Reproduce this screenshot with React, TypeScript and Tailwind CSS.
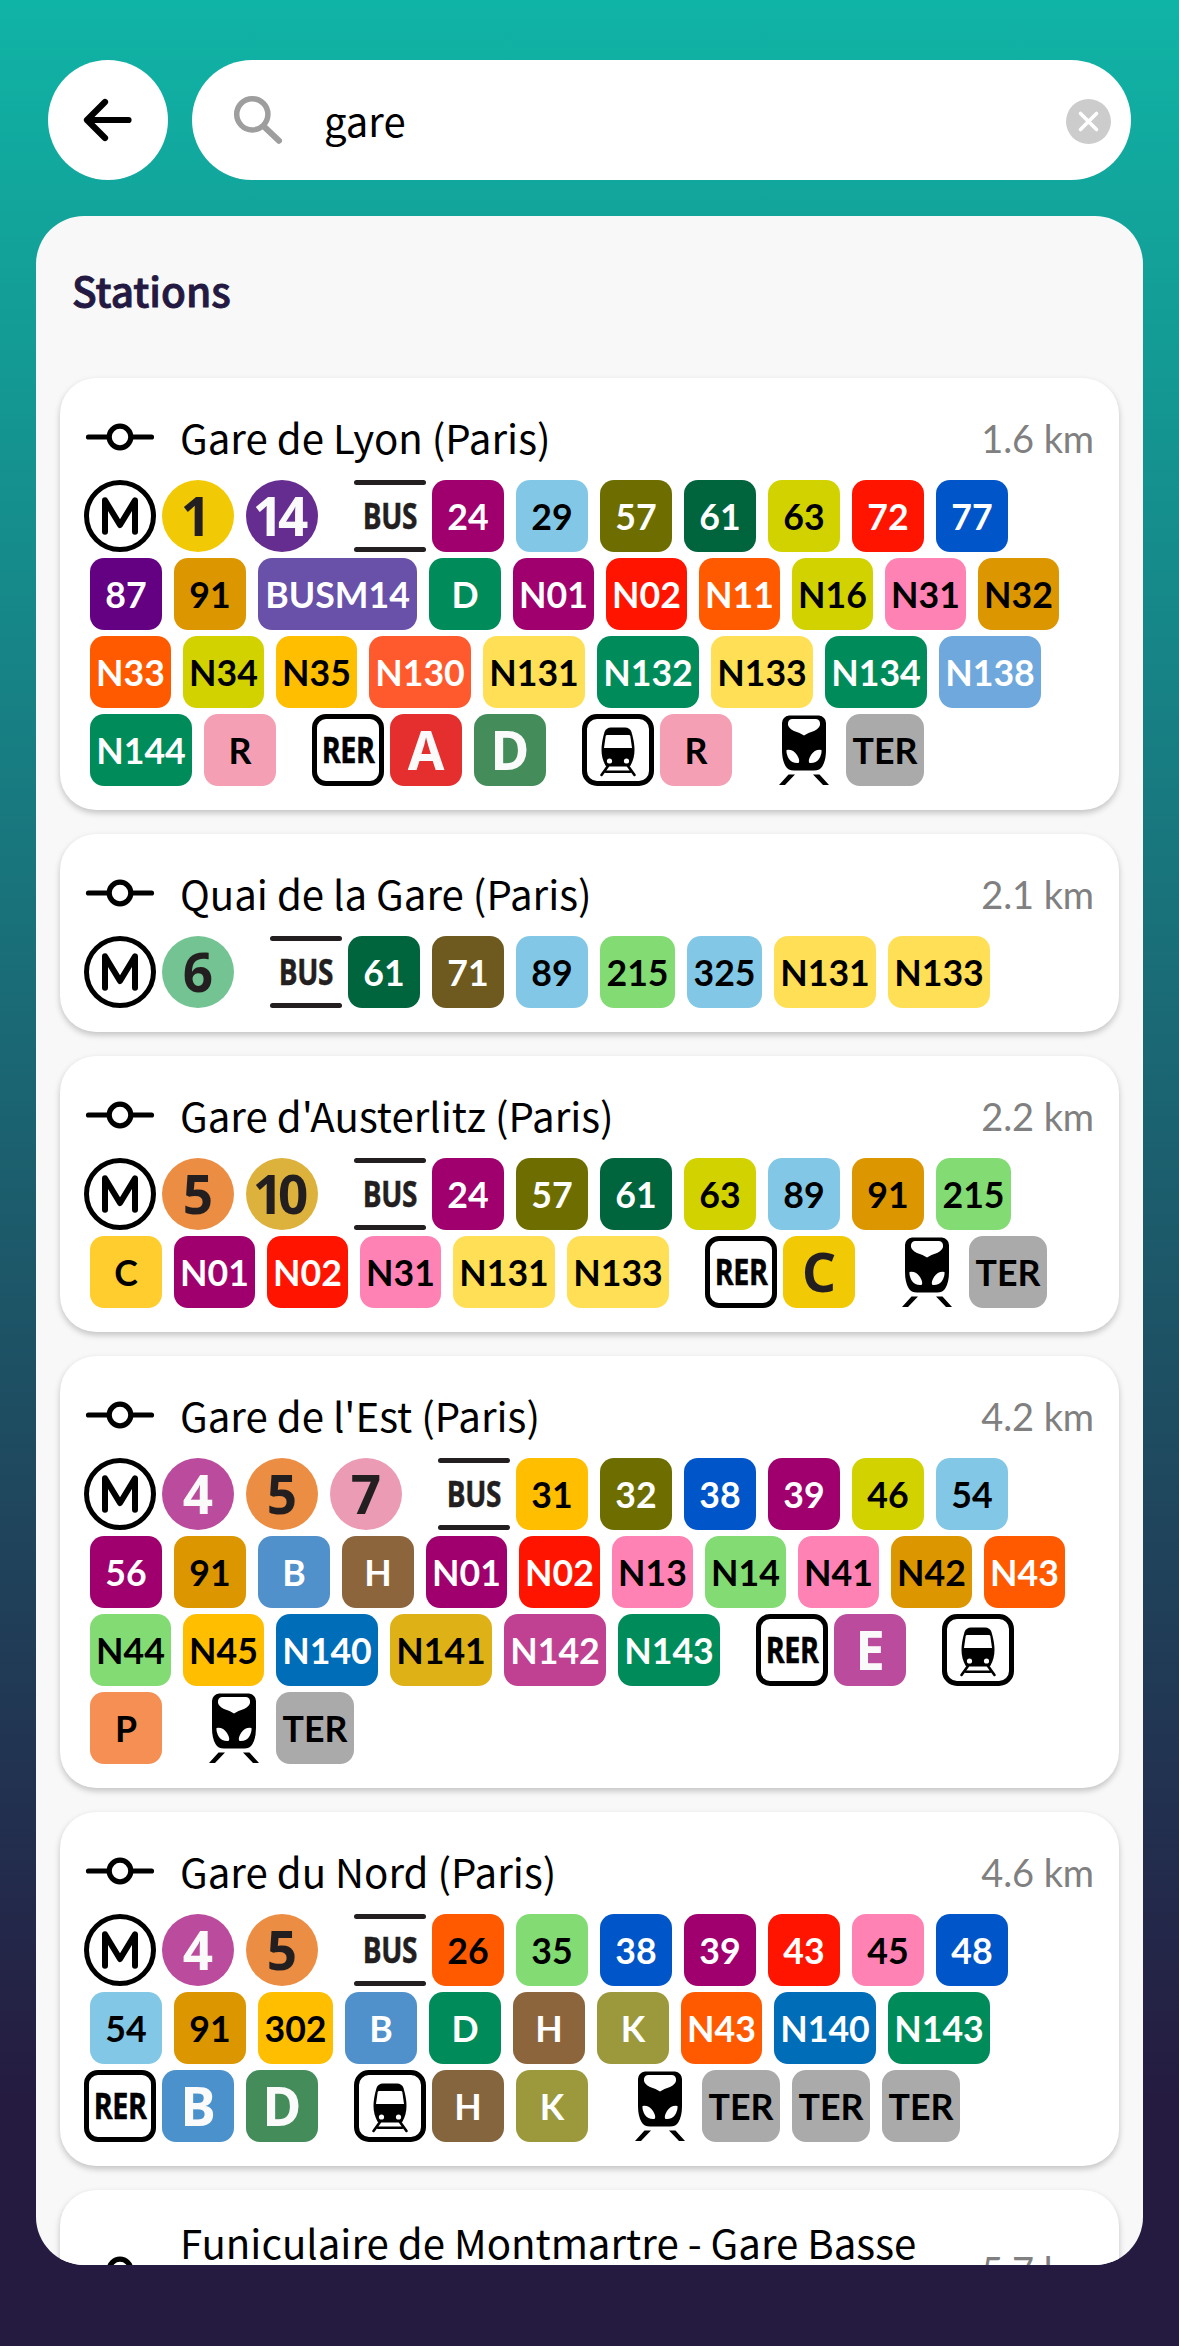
import React from "react";

type Tone = "w" | "k";
type Mode = "metro" | "bus" | "rer" | "train" | "ter";
type Item =
  | { k: "mode"; name: Mode }
  | { k: "gap" }
  | { k: "line"; t: string; bg: string; tone: Tone }
  | { k: "disc"; t: string; bg: string; tone: Tone }
  | { k: "rerLine"; t: string; bg: string; tone: Tone };

const W: Tone = "w";
const K: Tone = "k";

/* Colour and text tone of every bus / rail line badge */
const LINES: Record<string, [string, Tone]> = {
  "24": ["#a0006e", W], "29": ["#82c8e6", K], "57": ["#6e6e00", W], "61": ["#00643c", W],
  "63": ["#d2d200", K], "72": ["#ff1400", W], "77": ["#0055c8", W], "87": ["#640082", W],
  "91": ["#dc9600", K], BUSM14: ["#6950a8", W], D: ["#008c5a", W], N01: ["#a0006e", W],
  N02: ["#ff1400", W], N11: ["#ff5a00", W], N16: ["#d2d200", K], N31: ["#ff82b4", K],
  N32: ["#dc9600", K], N33: ["#ff5a00", W], N34: ["#d2d200", K], N35: ["#ffbe00", K],
  N130: ["#ff5a2d", W], N131: ["#ffdf55", K], N132: ["#008c5a", W], N133: ["#ffdf55", K],
  N134: ["#008c5a", W], N138: ["#6ea8dc", W], N144: ["#008c5a", W], R: ["#f49fb3", K],
  TER: ["#aaaaaa", K], "71": ["#6e5a1e", W], "89": ["#82c8e6", K], "215": ["#82dc73", K],
  "325": ["#82c8e6", K], C: ["#ffcd2d", K], "31": ["#ffbe00", K], "32": ["#6e6e00", W],
  "38": ["#0055c8", W], "39": ["#a0006e", W], "46": ["#d2d200", K], "54": ["#82c8e6", K],
  "56": ["#a0006e", W], B: ["#5091cb", W], H: ["#8d653d", W], N13: ["#ff82b4", K],
  N14: ["#82dc73", K], N41: ["#ff82b4", K], N42: ["#dc9600", K], N43: ["#ff5a00", W],
  N44: ["#82dc73", K], N45: ["#ffbe00", K], N140: ["#006db8", W], N141: ["#deb217", K],
  N142: ["#c04191", W], N143: ["#008c5a", W], P: ["#f68f53", K], "26": ["#ff5a00", K],
  "35": ["#82dc73", K], "43": ["#ff1400", W], "45": ["#ff82b4", K], "48": ["#0055c8", W],
  "302": ["#ffbe00", K], K: ["#9b993b", W], Ht: ["#84653d", W],
};

const METRO: Record<string, [string, Tone]> = {
  "1": ["#f2c905", K], "14": ["#662d91", W], "6": ["#73c492", K], "5": ["#eb8d43", K],
  "10": ["#dcb13c", K], "4": ["#bb4b9c", W], "7": ["#eb9bb4", K],
};

const RER: Record<string, [string, Tone]> = {
  A: ["#e52e2e", W], D: ["#458c5b", W], C: ["#f2c905", K], E: ["#bb4b9c", W], B: ["#4b92cd", W],
};

const lines = (s: string): Item[] =>
  s.split(" ").map((t) => ({ k: "line", t: t === "Ht" ? "H" : t, bg: LINES[t][0], tone: LINES[t][1] }));
const metro = (s: string): Item[] => [
  { k: "mode", name: "metro" },
  ...s.split(" ").map((t): Item => ({ k: "disc", t, bg: METRO[t][0], tone: METRO[t][1] })),
];
const rer = (s: string): Item[] => [
  { k: "gap" },
  { k: "mode", name: "rer" },
  ...s.split(" ").map((t): Item => ({ k: "rerLine", t, bg: RER[t][0], tone: RER[t][1] })),
];
const bus = (s: string): Item[] => [{ k: "gap" }, { k: "mode", name: "bus" }, ...lines(s)];
const train = (s: string): Item[] => [{ k: "gap" }, { k: "mode", name: "train" }, ...lines(s)];
const ter = (s: string): Item[] => [{ k: "gap" }, { k: "mode", name: "ter" }, ...lines(s)];

const STATIONS: { name: string; km: string; items: Item[] }[] = [
  {
    name: "Gare de Lyon (Paris)",
    km: "1.6 km",
    items: [
      ...metro("1 14"),
      ...bus("24 29 57 61 63 72 77 87 91 BUSM14 D N01 N02 N11 N16 N31 N32 N33 N34 N35 N130 N131 N132 N133 N134 N138 N144 R"),
      ...rer("A D"),
      ...train("R"),
      ...ter("TER"),
    ],
  },
  {
    name: "Quai de la Gare (Paris)",
    km: "2.1 km",
    items: [...metro("6"), ...bus("61 71 89 215 325 N131 N133")],
  },
  {
    name: "Gare d'Austerlitz (Paris)",
    km: "2.2 km",
    items: [
      ...metro("5 10"),
      ...bus("24 57 61 63 89 91 215 C N01 N02 N31 N131 N133"),
      ...rer("C"),
      ...ter("TER"),
    ],
  },
  {
    name: "Gare de l'Est (Paris)",
    km: "4.2 km",
    items: [
      ...metro("4 5 7"),
      ...bus("31 32 38 39 46 54 56 91 B H N01 N02 N13 N14 N41 N42 N43 N44 N45 N140 N141 N142 N143"),
      ...rer("E"),
      ...train("P"),
      ...ter("TER"),
    ],
  },
  {
    name: "Gare du Nord (Paris)",
    km: "4.6 km",
    items: [
      ...metro("4 5"),
      ...bus("26 35 38 39 43 45 48 54 91 302 B D H K N43 N140 N143"),
      ...rer("B D"),
      ...train("Ht K"),
      ...ter("TER TER TER"),
    ],
  },
];

function ModeIcon({ name }: { name: Mode }) {
  if (name === "metro")
    return (
      <svg className="h-[72px] w-[72px] shrink-0" viewBox="0 0 72 72" fill="none" stroke="#000">
        <circle cx="36" cy="36" r="33.500" strokeWidth="5" />
        <path d="M21 51.800V20.300L36 45L51 20.300V51.800" strokeWidth="6" strokeLinecap="round" strokeLinejoin="round" />
      </svg>
    );
  if (name === "bus")
    return (
      <div className="flex h-[72px] w-[72px] shrink-0 flex-col items-center justify-between">
        <div className="h-[5px] w-full rounded-full bg-[#231f20]" />
        <span className="-ml-[1px] scale-x-[0.80] font-['Open_Sans','Noto_Sans',sans-serif] text-[35px] leading-[62px] font-bold tracking-[-0.5px] text-[#231f20] [-webkit-text-stroke:0.5px_#231f20]">BUS</span>
        <div className="h-[5px] w-full rounded-full bg-[#231f20]" />
      </div>
    );
  if (name === "rer")
    return (
      <div className="flex h-[72px] w-[72px] shrink-0 items-center justify-center rounded-[14px] border-[5px] border-black bg-white">
        <span className="scale-x-[0.82] font-['Open_Sans','Noto_Sans',sans-serif] text-[35px] leading-[62px] font-bold tracking-[-0.5px] text-black [-webkit-text-stroke:0.5px_#000]">RER</span>
      </div>
    );
  if (name === "train")
    return (
      <svg className="h-[72px] w-[72px] shrink-0" viewBox="0 0 72 72">
        <rect x="2.500" y="2.500" width="67" height="67" rx="12.500" fill="#fff" stroke="#000" strokeWidth="5" />
        <path d="M29 13.500H43C46 13.500 48.500 15 49.500 18C51.500 25 52.500 30 52.500 36C52.500 42 51 47 48.500 51.500C48 52.200 47.500 52.500 46.500 52.500H25.500C24.500 52.500 24 52.200 23.500 51.500C21 47 19.500 42 19.500 36C19.500 30 20.500 25 22.500 18C23.500 15 26 13.500 29 13.500Z" fill="#000" />
        <path d="M25 21H47Q48 21 48.300 22L50 34H22L23.700 22Q24 21 25 21Z" fill="#fff" />
        <circle cx="27.500" cy="47" r="2.600" fill="#fff" />
        <circle cx="44.500" cy="47" r="2.600" fill="#fff" />
        <path d="M26 52L19.500 61M46 52L52.500 61M24 57.800H48" stroke="#000" strokeWidth="2.600" strokeLinecap="round" />
      </svg>
    );
  return (
    <svg className="h-[72px] w-[72px] shrink-0" viewBox="0 0 72 72">
      <path d="M21 1.500H51Q54 1.500 56 4Q58 6 58 9V36Q58 46 54.500 52Q52 56.500 46 56.500H26Q20 56.500 17.500 52Q14 46 14 36V9Q14 6 16 4Q18 1.500 21 1.500Z" fill="#000" />
      <path d="M24 5H48Q52.500 5.500 52 11Q51 14.500 46 17Q40 18.500 36 21.500Q32 18.500 26 17Q21 14.500 20 11Q19.500 5.500 24 5Z" fill="#fff" />
      <path d="M18.500 36Q25 35 29 41Q32.500 47 30.500 49Q24 49.500 21 45Q18 40 18.500 36ZM53.500 36Q47 35 43 41Q39.500 47 41.500 49Q48 49.500 51 45Q54 40 53.500 36Z" fill="#fff" />
      <path d="M20.500 60.500H27L17 71H11ZM51.500 60.500H45L55 71H61Z" fill="#000" />
    </svg>
  );
}

/* Badge widths follow the length of the line's name */
const lineWidth = (t: string) => {
  if (t === "TER") return "w-[78px]";
  if (t.length === 6) return "w-[159px]";
  if (t.length === 4) return "w-[102px]";
  if (t.length === 3) return t[0] === "N" ? "w-[81px]" : "w-[75px]";
  return "w-[72px]";
};

function Badge({ item }: { item: Item }) {
  if (item.k === "gap") return <span className="h-[72px] w-[30px] shrink-0" />;
  if (item.k === "mode") return <ModeIcon name={item.name} />;
  if (item.k === "line")
    return (
      <span
        className={`mx-[6px] flex h-[72px] shrink-0 items-center justify-center rounded-[14px] pt-[1px] font-[Lato,sans-serif] text-[35.7px] font-bold ${lineWidth(item.t)} ${item.tone === "w" ? "text-white" : "text-black"}`}
        style={{ backgroundColor: item.bg }}
      >
        {item.t}
      </span>
    );
  const spacing = item.t.length > 1 ? "-ml-[8px] tracking-[-5px]" : item.t === "1" ? "-ml-[4px]" : "";
  return (
    <span
      className={`mx-[6px] flex h-[72px] w-[72px] shrink-0 items-center justify-center font-['Noto_Sans','Open_Sans',sans-serif] text-[53px] font-bold ${item.k === "disc" ? "rounded-full" : "rounded-[14px]"} ${item.tone === "w" ? "text-[#fafafa]" : "text-[#231f20]"}`}
      style={{ backgroundColor: item.bg }}
    >
      <span className={`leading-[72px] ${spacing}`}>{item.t}</span>
    </span>
  );
}

function StopIcon() {
  return (
    <svg className="h-[30px] w-[72px] shrink-0" viewBox="0 0 72 30" fill="none" stroke="#000" strokeWidth="5.200">
      <path d="M4.500 15H25M47 15H67.500" strokeLinecap="round" />
      <circle cx="36" cy="15" r="10.800" fill="#fff" />
    </svg>
  );
}

const CARD = "rounded-[36px] bg-white px-6 shadow-[0_3px_6px_rgba(0,0,0,0.22)]";
const TITLE = "font-['Noto_Sans_CJK_JP',sans-serif] text-[40.2px] leading-[60px] text-black whitespace-nowrap";
const DISTANCE = "font-[Lato,sans-serif] text-[38px] text-[#808080] tracking-[-0.1px]";

export default function App() {
  return (
    <div className="flex h-[2346px] w-[1179px] flex-col overflow-hidden bg-[linear-gradient(180deg,#10b4a6_0%,#251a40_90%)]">
      <header className="flex gap-6 px-12 pt-[60px]">
        <button className="flex h-[120px] w-[120px] shrink-0 items-center justify-center rounded-full bg-white">
          <svg className="h-[48px] w-[54px]" viewBox="0 0 54 48" fill="none" stroke="#000" strokeWidth="6.200" strokeLinecap="round" strokeLinejoin="round">
            <path d="M6 24H47.500M24 6L6 24L24 42" />
          </svg>
        </button>
        <div className="flex h-[120px] flex-1 items-center rounded-full bg-white pr-[19px] pl-[40px]">
          <svg className="h-[54px] w-[54px] shrink-0" viewBox="0 0 54 54" fill="none" stroke="#9e9e9e" strokeLinecap="round">
            <circle cx="20.300" cy="21.300" r="15.600" strokeWidth="5.500" />
            <path d="M33 34.500L47 47.700" strokeWidth="6" />
          </svg>
          <span className="-mt-[1px] ml-[38px] flex-1 font-['Noto_Sans_CJK_JP',sans-serif] text-[40px] leading-[60px] text-black">gare</span>
          <svg className="h-[46px] w-[46px] shrink-0" viewBox="0 0 46 46" overflow="visible">
            <circle cx="22.500" cy="24.500" r="22.500" fill="#cccccc" />
            <path d="M14.500 16.500L30.500 32.500M30.500 16.500L14.500 32.500" stroke="#fff" strokeWidth="3.600" strokeLinecap="round" />
          </svg>
        </div>
      </header>

      <main className="mx-9 mt-9 h-[2049px] overflow-hidden rounded-[48px] bg-[#f8f8f8] px-6">
        <h1 className="mt-[44px] mb-[58px] px-3 font-['Noto_Sans_CJK_JP',sans-serif] text-[40.6px] leading-[60px] font-medium text-[#231942] [-webkit-text-stroke:0.9px_#231942]">Stations</h1>
        <div className="flex flex-col gap-6">
          {STATIONS.map((s) => (
            <section key={s.name} className={`${CARD} pb-6`}>
              <div className="flex h-[102px] items-center">
                <div className="mt-[15px]">
                  <StopIcon />
                </div>
                <h2 className={`${TITLE} mt-[16px] ml-6 flex-1`}>{s.name}</h2>
                <span className={`${DISTANCE} mt-[18px] mr-[1px]`}>{s.km}</span>
              </div>
              <div className="flex flex-wrap gap-y-1.5">
                {s.items.map((it, i) => (
                  <Badge key={i} item={it} />
                ))}
              </div>
            </section>
          ))}
          <section className={`${CARD} flex h-[200px] items-start`}>
            <div className="mt-[65px]">
              <StopIcon />
            </div>
            <h2 className={`${TITLE} mt-[22px] ml-6 flex-1`}>
              Funiculaire de Montmartre - Gare Basse
            </h2>
            <span className={`${DISTANCE} mt-[52px] mr-[1px]`}>5.7 km</span>
          </section>
        </div>
      </main>
    </div>
  );
}
